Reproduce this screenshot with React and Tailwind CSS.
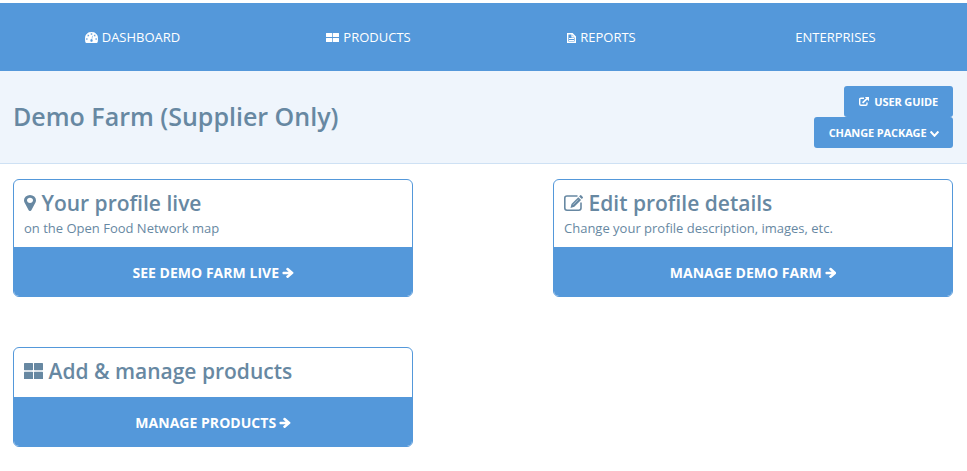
const PATHS = {
  dashboard:
    'M384 1152q0-53-37.5-90.5t-90.5-37.5-90.5 37.5-37.5 90.5 37.5 90.5 90.5 37.5 90.5-37.5 37.5-90.5zm192-448q0-53-37.5-90.5t-90.5-37.5-90.5 37.5-37.5 90.5 37.5 90.5 90.5 37.5 90.5-37.5 37.5-90.5zm428 481l101-382q6-26-7.5-48.5t-38.5-29.5-48 6.5-30 39.5l-101 382q-60 5-107 43.5t-63 98.5q-20 77 20 146t117 89 146-20 89-117q16-60-6-117t-72-91zm660-33q0-53-37.5-90.5t-90.5-37.5-90.5 37.5-37.5 90.5 37.5 90.5 90.5 37.5 90.5-37.5 37.5-90.5zm-640-640q0-53-37.5-90.5t-90.5-37.5-90.5 37.5-37.5 90.5 37.5 90.5 90.5 37.5 90.5-37.5 37.5-90.5zm448 192q0-53-37.5-90.5t-90.5-37.5-90.5 37.5-37.5 90.5 37.5 90.5 90.5 37.5 90.5-37.5 37.5-90.5zm320 448q0 261-141 483-19 29-54 29h-1402q-35 0-54-29-141-221-141-483 0-182 71-348t191-286 286-191 348-71 348 71 286 191 191 286 71 348z',
  marker:
    'M1152 640q0-106-75-181t-181-75-181 75-75 181 75 181 181 75 181-75 75-181zm256 0q0 109-33 179l-364 774q-16 33-47.5 52t-67.5 19-67.5-19-46.5-52l-365-774q-33-70-33-179 0-212 150-362t362-150 362 150 150 362z',
  arrow:
    'M1600 960q0 54-37 91l-651 651q-39 37-91 37-51 0-90-37l-75-75q-38-38-38-91t38-91l293-293h-704q-52 0-84.5-37.5t-32.5-90.5v-128q0-53 32.5-90.5t84.5-37.5h704l-293-294q-38-36-38-90t38-90l75-75q38-38 90-38 53 0 91 38l651 651q37 35 37 90z',
  chevron:
    'M1683 808l-742 741q-19 19-45 19t-45-19l-742-741q-19-19-19-45.5t19-45.5l166-165q19-19 45-19t45 19l531 531 531-531q19-19 45-19t45 19l166 165q19 19 19 45.5t-19 45.5z',
};

function Icon({ name, viewBox = '0 0 1792 1792', className }) {
  return (
    <svg viewBox={viewBox} preserveAspectRatio="none" fill="currentColor" className={`shrink-0 ${className}`}>
      <path d={PATHS[name]} />
    </svg>
  );
}

function Blocks({ className }) {
  return (
    <svg viewBox="0 0 19 16" preserveAspectRatio="none" fill="currentColor" className={`shrink-0 ${className}`}>
      <rect x="0" y="0" width="9" height="7.2" rx=".6" />
      <rect x="10" y="0" width="9" height="7.2" rx=".6" />
      <rect x="0" y="8.8" width="9" height="7.2" rx=".6" />
      <rect x="10" y="8.8" width="9" height="7.2" rx=".6" />
    </svg>
  );
}

function EditIcon({ className }) {
  return (
    <svg viewBox="0 0 19 16" fill="none" stroke="currentColor" className={`shrink-0 ${className}`}>
      <path d="M13.5 1H3Q.8 1 .8 3v10q0 2.2 2.2 2.2h11.8q2.2 0 2.2-2.2V7.5" strokeWidth="1.6" />
      <path d="M6.5 13l1-4 6.8-6.8 2.8 2.8-6.8 6.8z" fill="currentColor" stroke="none" />
      <path d="M15.1 1.4L16.2.3q.5-.4 1 0L18.8 1.9q.4.5 0 1L17.8 4z" fill="currentColor" stroke="none" />
      <path d="M9 9.8l5.2-5.2" stroke="white" strokeWidth=".5" />
    </svg>
  );
}

function FileIcon({ className }) {
  return (
    <svg viewBox="0 0 9 10" fill="none" stroke="currentColor" strokeWidth="1.4" className={`shrink-0 ${className}`}>
      <path d="M.7.7h4.6l3 3v5.6H.7z" />
      <path d="M5 .7v3.2h3.2M2 5.5h5M2 7.5h5" strokeWidth="1.1" />
    </svg>
  );
}

function ExternalIcon({ className }) {
  return (
    <svg viewBox="0 0 10 9" fill="none" stroke="currentColor" strokeWidth="1.4" className={`shrink-0 ${className}`}>
      <path d="M5 1.2H2Q.7 1.2.7 2.4v4.7q0 1.2 1.3 1.2h4.8q1.2 0 1.2-1.2V5.5" />
      <path d="M3.6 5.8L8 1.6" strokeWidth="1.7" />
      <path d="M5.8 0H10v4.2z" fill="currentColor" stroke="none" />
    </svg>
  );
}

function NavItem({ icon, children }) {
  return (
    <a className="flex items-center justify-center gap-1 pt-0.5">
      {icon}
      <span>{children}</span>
    </a>
  );
}

function Card({ icon, title, text, action, className = '' }) {
  return (
    <section className={`w-[400px] overflow-hidden rounded-md border border-[#5498da] bg-white ${className}`}>
      <div className={text ? 'h-[67px] px-2.5 pt-2' : 'h-[49px] px-2.5 pt-2'}>
        <h3 className="flex h-[30px] items-center text-[21px] leading-[30px] font-semibold">
          {icon}
          {title}
        </h3>
        {text && <p className="text-[13px] leading-5">{text}</p>}
      </div>
      <a className="flex h-[49px] items-center justify-center gap-[3px] bg-[#5498da] pt-[3px] text-sm font-bold tracking-[0.03px] text-white">
        {action}
        <Icon name="arrow" viewBox="64 53 1536 1686" className="mb-0.5 h-[11px] w-[11.5px]" />
      </a>
    </section>
  );
}

export default function App() {
  return (
    <div className="h-[471px] w-[967px] overflow-hidden bg-white pt-[3px] font-['Open_Sans',sans-serif] text-[#6788a2]">
      <nav className="grid h-[68px] grid-cols-[233px_239px_227px_241px] bg-[#5498da] pl-4 text-[13px] text-white">
        <NavItem icon={<Icon name="dashboard" viewBox="0 256 1792 1408" className="mb-px h-[11px] w-[13px] stroke-current stroke-[70px]" />}>DASHBOARD</NavItem>
        <NavItem icon={<Blocks className="mb-px h-[9px] w-[13px]" />}>PRODUCTS</NavItem>
        <NavItem icon={<FileIcon className="mb-px h-[10px] w-[9px]" />}>REPORTS</NavItem>
        <NavItem>ENTERPRISES</NavItem>
      </nav>
      <header className="flex h-[93px] items-start justify-between border-b border-[#cee1f4] bg-[#eff5fc] pr-3.5 pl-[13px]">
        <h1 className="pt-[26px] text-[25px] leading-[38px] font-semibold">Demo Farm (Supplier Only)</h1>
        <div className="flex flex-col items-end pt-[15px] text-[11px] font-bold tracking-[-0.12px] text-white">
          <button className="flex h-[31px] w-[109px] items-center justify-end gap-[5px] rounded-[3px] bg-[#5498da] pt-0.5 pr-[15px]">
            <ExternalIcon className="mb-0.5 h-[9px] w-[10px]" />
            USER GUIDE
          </button>
          <button className="flex h-[31px] w-[139px] items-center justify-end gap-[3px] rounded-[3px] bg-[#5498da] pt-0.5 pr-[14.5px]">
            CHANGE PACKAGE
            <Icon name="chevron" viewBox="90 533 1612 1035" className="h-[6px] w-[9px]" />
          </button>
        </div>
      </header>
      <main className="grid grid-cols-[400px_400px] items-start justify-between gap-y-[50px] pt-[15px] pr-3.5 pl-[13px]">
        <Card
          icon={<Icon name="marker" viewBox="384 128 1024 1536" className="mr-[5.5px] h-4 w-3" />}
          title="Your profile live"
          text="on the Open Food Network map"
          action="SEE DEMO FARM LIVE"
        />
        <Card
          icon={<EditIcon className="mr-[5.5px] h-4 w-[19px]" />}
          title="Edit profile details"
          text="Change your profile description, images, etc."
          action="MANAGE DEMO FARM"
        />
        <Card
          icon={<Blocks className="mr-[5.5px] h-4 w-[19px]" />}
          title="Add & manage products"
          action="MANAGE PRODUCTS"
        />
      </main>
    </div>
  );
}
